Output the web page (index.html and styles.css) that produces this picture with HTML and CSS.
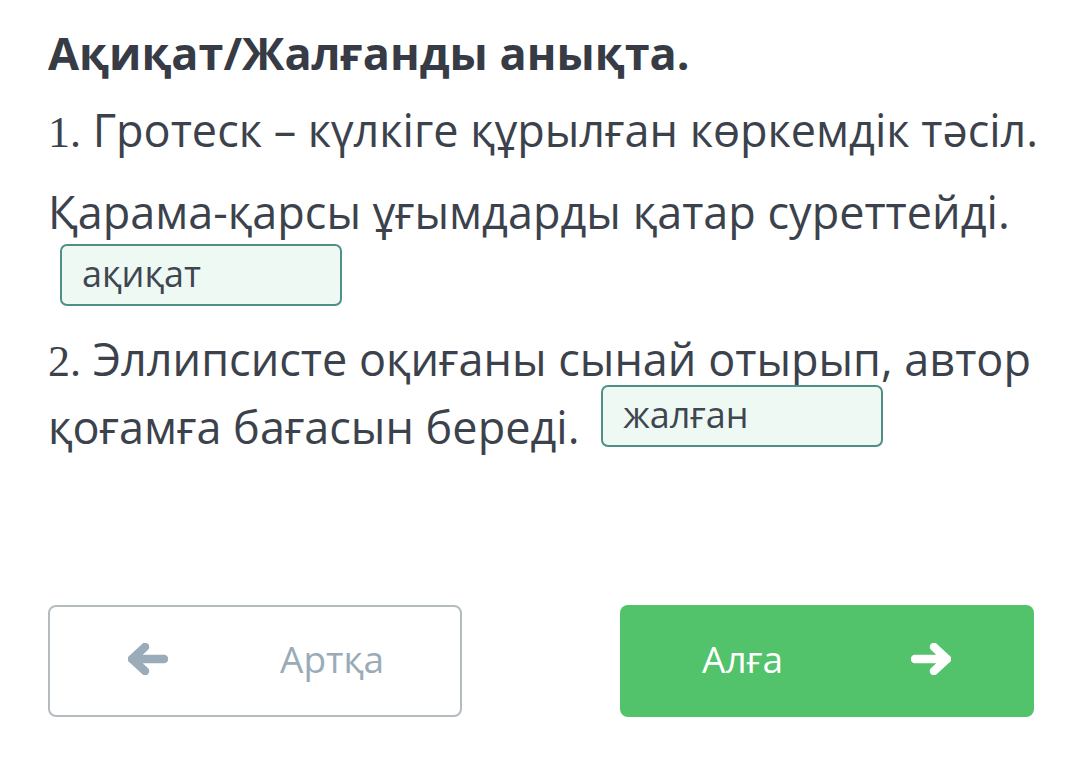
FILE: index.html
```html
<!DOCTYPE html>
<html lang="kk">
<head>
<meta charset="utf-8">
<link rel="stylesheet" href="styles.css">
</head>
<body>
<main class="page">
  <h1 class="title">Ақиқат/Жалғанды анықта.</h1>
  <p class="line first"><span class="num">1.</span> Гротеск – күлкіге құрылған көркемдік тәсіл.</p>
  <p class="line second">Қарама-қарсы ұғымдарды қатар суреттейді.</p>
  <div class="answer-row"><span class="answer wide">ақиқат</span></div>
  <p class="line third"><span class="num">2.</span> Эллипсисте оқиғаны сынай отырып, автор<br>қоғамға бағасын береді. <span class="answer inline">жалған</span></p>
  <div class="nav">
    <button class="btn back">
      <svg class="arrow" viewBox="0 0 40 32" width="40" height="32"><path d="M4 16 L17 4 M4 16 L17 28 M4 16 H36" fill="none" stroke="#9aabb9" stroke-width="8.5" stroke-linecap="round" stroke-linejoin="round"/></svg>
      <span class="label">Артқа</span>
    </button>
    <button class="btn next">
      <span class="label">Алға</span>
      <svg class="arrow" viewBox="0 0 40 32" width="40" height="32"><path d="M36 16 L23 4 M36 16 L23 28 M36 16 H4" fill="none" stroke="#ffffff" stroke-width="8.5" stroke-linecap="round" stroke-linejoin="round"/></svg>
    </button>
  </div>
</main>
</body>
</html>
```
FILE: styles.css
```css
html, body {
  margin: 0;
  padding: 0;
  background: #ffffff;
}
.page {
  width: 1080px;
  height: 765px;
  box-sizing: border-box;
  padding: 23px 40px 0 48px;
  font-family: "Open Sans", "Noto Sans", sans-serif;
  color: #3c424c;
  display: flex;
  flex-direction: column;
}
.title {
  margin: 0;
  font-size: 45px;
  font-weight: 700;
  line-height: 60px;
  color: #363b45;
}
.line {
  margin: 0;
  font-size: 45px;
  font-weight: 400;
  line-height: 65px;
  white-space: nowrap;
}
.first { margin-top: 14px; }
.second { margin-top: 14px; }
.num {
  font-family: "Liberation Serif", "DejaVu Serif", serif;
  font-size: 44px;
}
.answer-row {
  display: flex;
  padding-left: 12px;
  margin-top: 0;
}
.answer {
  box-sizing: border-box;
  display: inline-block;
  width: 282px;
  height: 62px;
  border: 2px solid #4f8f88;
  border-radius: 7px;
  background: #eef9f4;
  color: #3f4650;
  font-size: 36px;
  line-height: 56px;
  padding-left: 20px;
  text-align: left;
}
.third { margin-top: 20px; }
.answer.inline {
  vertical-align: 16px;
  margin-top: -24px;
  margin-left: 10px;
}
.nav {
  margin-top: auto;
  margin-bottom: 48px;
  display: flex;
  gap: 158px;
}
.btn {
  box-sizing: border-box;
  width: 414px;
  height: 112px;
  border-radius: 8px;
  font-family: "Open Sans", "Noto Sans", sans-serif;
  font-size: 37px;
  display: flex;
  align-items: center;
  padding: 0 0 5px 0;
  cursor: pointer;
}
.back {
  background: #ffffff;
  border: 2px solid #b4bcc0;
  color: #9aabb8;
  padding-left: 78px;
}
.back .label { margin-left: 112px; }
.next {
  background: #52c26b;
  border: none;
  color: #ffffff;
  padding-left: 82px;
}
.next .label { margin-right: 128px; }
```
